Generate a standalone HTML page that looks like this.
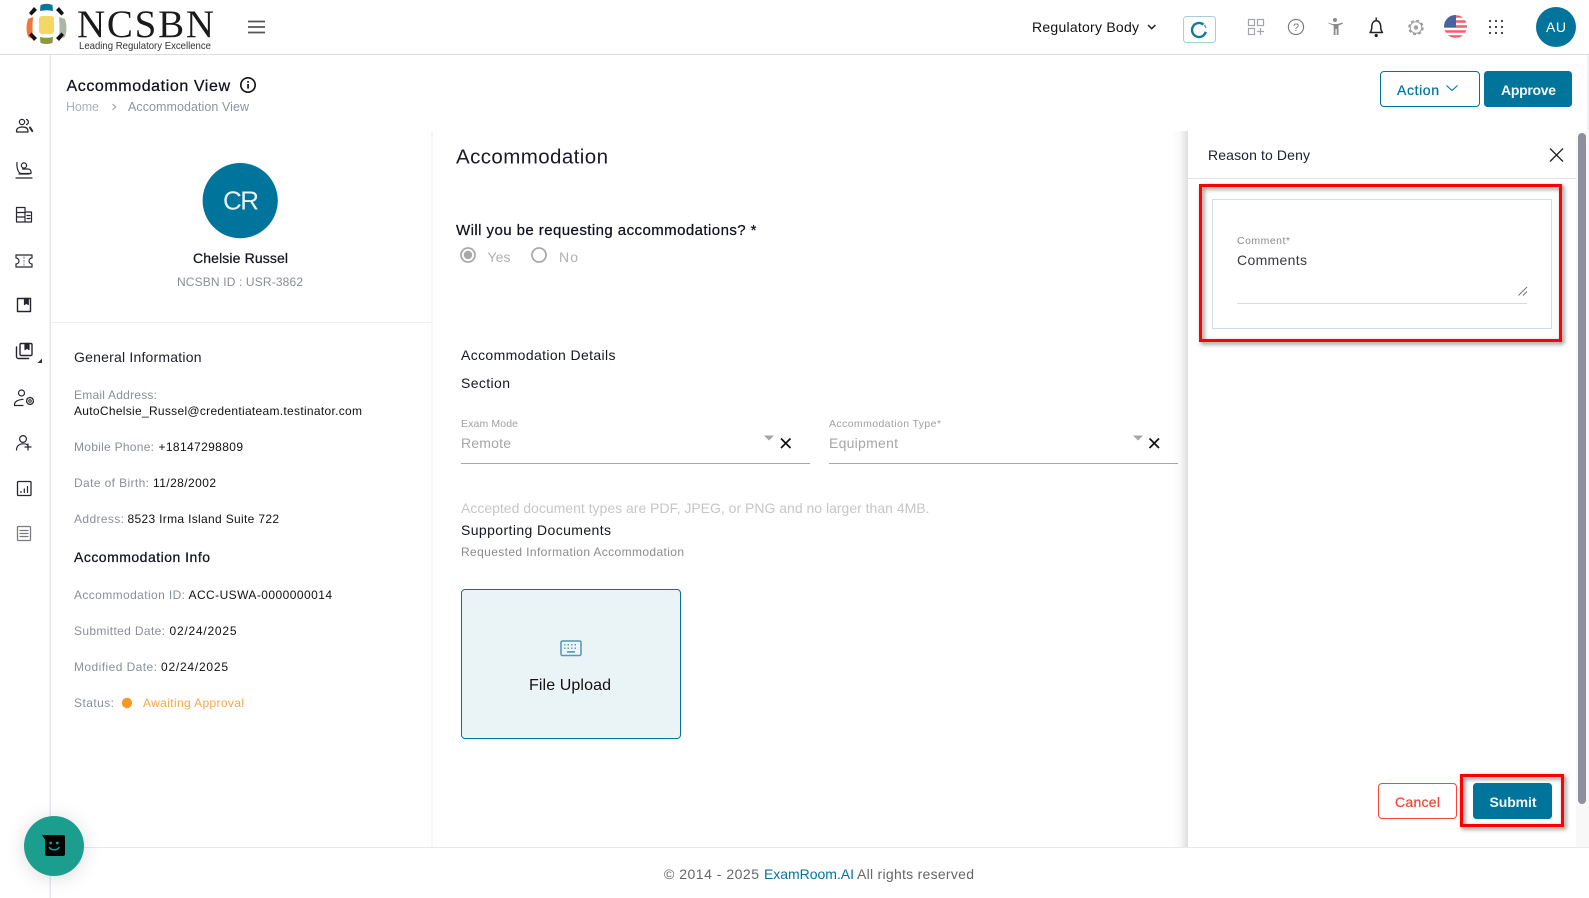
<!DOCTYPE html>
<html lang="en">
<head>
<meta charset="utf-8">
<title>Accommodation View</title>
<style>
html,body{margin:0;padding:0;background:#fff;width:1589px;height:898px;overflow:hidden}
svg{display:block;font-family:"Liberation Sans",Arial,sans-serif}
text{white-space:pre}
.m{stroke-width:.25}
.lab{fill:#8a8f98;font-size:12px}
.val{fill:#111;font-size:12px}
.i{fill:none;stroke:#26262e;stroke-width:1.2;stroke-linecap:round;stroke-linejoin:round}
</style>
</head>
<body>
<svg width="1589" height="898" viewBox="0 0 1589 898" xmlns="http://www.w3.org/2000/svg">
<defs>
<linearGradient id="sh" x1="0" x2="1" y1="0" y2="0"><stop offset="0" stop-color="#000" stop-opacity="0"/><stop offset=".5" stop-color="#000" stop-opacity=".025"/><stop offset="1" stop-color="#000" stop-opacity=".13"/></linearGradient>
<clipPath id="fl"><circle cx="1455.5" cy="26.5" r="11.5"/></clipPath>
<filter id="cs" x="-40%" y="-40%" width="180%" height="180%"><feDropShadow dx="0" dy="2" stdDeviation="9" flood-color="#000" flood-opacity=".14"/></filter>
</defs>
<rect width="1589" height="898" fill="#fff"/>

<!-- structure lines -->
<rect x="0" y="54" width="1589" height="1" fill="#d9dfe4"/>
<rect x="49.500" y="55" width="1.400" height="843" fill="#e6e6ef"/>
<rect x="431.500" y="131" width="1" height="716" fill="#efeff3"/>
<rect x="51" y="322" width="381" height="1" fill="#efeff3"/>
<rect x="51" y="847" width="1538" height="1" fill="#e8e8ec"/>
<rect x="1587.500" y="55" width="1" height="76" fill="#e4e4e8"/>

<!-- logo -->
<g>
<path d="M40 11 L40.500 5 Q46.500 2.500 52.500 5 L53 11 Q46.500 9.500 40 11Z" fill="#0b7797"/>
<path d="M33 17 L28 19 Q25 28 28 37 L33 39 Q32 28 33 17Z" fill="#f0763c"/>
<path d="M59 17 L65 19 Q68 28 65 37 L59 39 Q60 28 59 17Z" fill="#adb5a5"/>
<path d="M40 37 Q46.500 38.500 53 37 L52.500 43 Q46.500 45 40.500 43Z" fill="#8a9a3d"/>
<rect x="39" y="16" width="15" height="18" rx="3" fill="#f4d765"/>
<path d="M29 13 L34 7 L37 10 L31.500 15.500Z M64 13 L59 7 L56 10 L61.500 15.500Z M29 35 L34 41 L37 38 L31.500 32.500Z M64 35 L59 41 L56 38 L61.500 32.500Z" fill="#141414"/>
<text x="77" y="37" font-family="'Liberation Serif',serif" font-size="39" fill="#1a1a1a" textLength="137">NCSBN</text>
<text x="79" y="49" font-size="10.500" fill="#333" textLength="132" lengthAdjust="spacingAndGlyphs">Leading Regulatory Excellence</text>
</g>
<path d="M248 21.500H265M248 27H265M248 32.500H265" stroke="#555" stroke-width="1.700"/>

<!-- header right -->
<text x="1032" y="32" font-size="14" fill="#111" textLength="107">Regulatory Body</text>
<path d="M1148 25l3.700 3.700L1155.400 25" fill="none" stroke="#222" stroke-width="1.500"/>
<rect x="1183.500" y="16.500" width="32" height="26" rx="3" fill="#fff" stroke="#a6cfdd"/>
<path d="M1205.800 31.800A7 7 0 1 1 1203.500 24.600" fill="none" stroke="#0f7b9e" stroke-width="2.400"/>
<path d="M1204.500 24.800L1206 28" fill="none" stroke="#5fa8bf" stroke-width="1.600"/>
<g fill="none" stroke="#a3a7ad" stroke-width="1.200">
<rect x="1248.500" y="19.500" width="6" height="6"/><rect x="1257.500" y="19.500" width="6" height="6"/><rect x="1248.500" y="28.500" width="6" height="6"/><path d="M1257 31.500h7M1260.500 28v7"/>
</g>
<circle cx="1296" cy="27" r="7.600" fill="none" stroke="#777" stroke-width="1.100"/>
<text x="1296" y="31" font-size="11" fill="#777" text-anchor="middle">?</text>
<g fill="#8a8a8a" transform="translate(-1.500 0)"><circle cx="1336.500" cy="20" r="2"/><path d="M1329 22.500l5 1.500h5l5-1.500.4 1.300-4.400 1.700v9.500h-1.800v-6h-1.200v6h-1.800v-9.500l-4.600-1.700z"/></g>
<g transform="translate(-1 0)">
<path d="M1371 32.500h12.500c-1.400-1.500-1.800-3-1.800-6 0-3.300-1.800-5.600-4.400-5.900-2.700.3-4.500 2.600-4.500 5.900 0 3-.4 4.500-1.800 6z" fill="none" stroke="#222" stroke-width="1.500" stroke-linejoin="round"/>
<path d="M1377.200 17.500v3" stroke="#222" stroke-width="1.400"/><circle cx="1377.200" cy="35.500" r="1.600" fill="#222"/>
</g>
<g fill="none" stroke="#9a9a9a"><circle cx="1416" cy="27.500" r="5.800" stroke-width="1"/><circle cx="1416" cy="27.500" r="7" stroke-width="1.600" stroke-dasharray="3 2.500"/></g>
<circle cx="1416" cy="27.500" r="2.200" fill="#a0a0a0"/>
<g clip-path="url(#fl)">
<rect x="1444" y="15" width="23" height="23" fill="#fff"/>
<path d="M1444 16.500h23M1444 21.500h23M1444 26.500h23M1444 31.500h23M1444 36.500h23" stroke="#ef5f6e" stroke-width="2.600"/>
<rect x="1444" y="15" width="12" height="12.500" fill="#47639f"/>
</g>
<g fill="#333">
<circle cx="1490" cy="21" r="1.100"/><circle cx="1496" cy="21" r="1.100"/><circle cx="1502" cy="21" r="1.100"/>
<circle cx="1490" cy="27" r="1.100"/><circle cx="1496" cy="27" r="1.100"/><circle cx="1502" cy="27" r="1.100"/>
<circle cx="1490" cy="33" r="1.100"/><circle cx="1496" cy="33" r="1.100"/><circle cx="1502" cy="33" r="1.100"/>
</g>
<circle cx="1556" cy="27" r="20" fill="#00749b"/>
<text x="1546" y="32" font-size="14" fill="#fff" textLength="20">AU</text>

<!-- page title -->
<text x="66.500" y="91" font-size="16" fill="#10121c" stroke="#10121c" class="m" textLength="163.500">Accommodation View</text>
<circle cx="248" cy="85" r="7.200" fill="none" stroke="#111" stroke-width="1.600"/>
<rect x="247.200" y="84" width="1.700" height="4.600" fill="#111"/><rect x="247.200" y="81" width="1.700" height="1.700" fill="#111"/>
<text x="66" y="111" font-size="12.500" fill="#aeb0b8" textLength="33">Home</text>
<path d="M112.500 104l3.200 3-3.200 3" fill="none" stroke="#9a9ca4" stroke-width="1"/>
<text x="128" y="111" font-size="12.500" fill="#8f93a3" textLength="121">Accommodation View</text>

<rect x="1380.500" y="71.500" width="99" height="35" rx="3.500" fill="#fff" stroke="#00749b"/>
<text x="1397" y="95" font-size="14" fill="#00749b" stroke="#00749b" class="m" textLength="42">Action</text>
<path d="M1446.500 85.500l5.500 5 5.500-5" fill="none" stroke="#00749b" stroke-width="1.100"/>
<rect x="1484" y="71" width="88" height="36" rx="3.500" fill="#00749b"/>
<text x="1501" y="95" font-size="14" font-weight="700" fill="#f2f7f9" textLength="55">Approve</text>

<!-- sidebar icons -->
<g class="i">
<circle cx="22" cy="122" r="2.600"/><path d="M26.500 119.500a2.600 2.600 0 0 1 0 5"/><path d="M16.500 132v-1c0-2.800 2.600-4 5.800-4s5.700 1.200 5.700 4v1z"/><path d="M30 127.500l2.200 3.500" stroke-width="2"/>
<path d="M16 178h16"/><path d="M17 162.500c-.6 4 .5 9 3.500 11H31v-1.500c0-1.800-1.200-3-3-3h-5.500"/><circle cx="24" cy="165.500" r="2.600"/><path d="M19 174h10"/>
<path d="M16.500 207.500h8.500v14.500h-8.500zM16.500 212.500h8.500M16.500 217h8.500M25 212h6.500v10H25M27 215.500h3M27 218.500h3"/>
<path d="M16 255h16v3a3 3 0 0 0 0 6v3H16v-3a3 3 0 0 0 0-6z"/><path d="M24 257v8" stroke="#999" stroke-dasharray="1.500 2"/>
<rect x="17.500" y="298.500" width="13" height="13" stroke-width="1.400"/>
<path d="M24.500 298.500h3.800v6l-1.900-1.400-1.900 1.400z" fill="#26262e"/>
<rect x="20" y="343.500" width="12" height="12" rx="1.200" stroke-width="1.400"/><path d="M16.500 347v9.500a2 2 0 0 0 2 2h10" stroke-width="1.400"/><path d="M25 343.500h4v6l-2-1.400-2 1.400z" fill="#26262e"/>
<circle cx="21.500" cy="393" r="3"/><path d="M14.500 405v-.5c0-3 3.600-4.800 8.500-5.200M14.500 405.500H23"/>
<circle cx="30" cy="401" r="1.300" stroke-width="1"/><circle cx="30" cy="401" r="3.400" stroke-dasharray="1.800 1.200" stroke-width="1.400"/>
<circle cx="23" cy="439" r="3.400"/><path d="M16.500 450c0-4 2.800-6.200 6.500-6.200s3.500.5 4.500 1.200M25 447h6M28 444v6"/>
<rect x="17.500" y="481.500" width="13.500" height="14" rx="1" stroke-width="1.300"/><path d="M21 492.500v-1M24.300 492.500v-3.500M27.500 492.500v-6"/>
<g stroke="#7a7a80"><rect x="17.500" y="526.500" width="13" height="14" rx="1" stroke-width="1.300"/><path d="M20 530.500h8M20 533.500h8M20 536.500h8"/></g>
</g>
<path d="M37.500 363h4.500v-4.500z" fill="#333"/>

<!-- left panel -->
<circle cx="240.200" cy="200.600" r="37.600" fill="#00749b"/>
<text x="223" y="209.500" font-size="26" fill="#e8f2f6" textLength="36">CR</text>
<text x="193" y="263" font-size="14" fill="#15171f" stroke="#15171f" class="m" textLength="95">Chelsie Russel</text>
<text x="177" y="286" font-size="12" fill="#8a8d94" textLength="126">NCSBN ID : USR-3862</text>

<text x="74" y="362" font-size="14" fill="#20222a" textLength="127.500">General Information</text>
<text x="74" y="399" class="lab" textLength="83">Email Address:</text>
<text x="74" y="415" class="val" textLength="288">AutoChelsie_Russel@credentiateam.testinator.com</text>
<text x="74" y="451" class="lab" textLength="80">Mobile Phone:</text>
<text x="158.500" y="451" class="val" textLength="84.500">+18147298809</text>
<text x="74" y="487" class="lab" textLength="75">Date of Birth:</text>
<text x="153" y="487" class="val" textLength="63">11/28/2002</text>
<text x="74" y="523" class="lab" textLength="50">Address:</text>
<text x="127.500" y="523" class="val" textLength="151.500">8523 Irma Island Suite 722</text>
<text x="74" y="562" font-size="14" fill="#10121c" stroke="#10121c" class="m" textLength="136">Accommodation Info</text>
<text x="74" y="599" class="lab" textLength="111">Accommodation ID:</text>
<text x="188.500" y="599" class="val" textLength="143.500">ACC-USWA-0000000014</text>
<text x="74" y="635" class="lab" textLength="91">Submitted Date:</text>
<text x="169.500" y="635" class="val" textLength="67">02/24/2025</text>
<text x="74" y="671" class="lab" textLength="83">Modified Date:</text>
<text x="161" y="671" class="val" textLength="67">02/24/2025</text>
<text x="74" y="707" class="lab" textLength="40">Status:</text>
<circle cx="127" cy="703" r="5.200" fill="#f59a23"/>
<text x="143" y="707" font-size="12" fill="#f7a64a" textLength="101">Awaiting Approval</text>

<!-- main -->
<text x="456" y="163.500" font-size="20.500" fill="#1a1a22" textLength="152">Accommodation</text>
<text x="456" y="235" font-size="15" fill="#10121c" stroke="#10121c" class="m" textLength="300.500">Will you be requesting accommodations? *</text>
<circle cx="468" cy="255" r="7" fill="none" stroke="#a9a9a9" stroke-width="1.800"/><circle cx="468" cy="255" r="4.200" fill="#a9a9a9"/>
<text x="487.500" y="262" font-size="14" fill="#b0b0b0" textLength="23">Yes</text>
<circle cx="539" cy="255" r="7" fill="none" stroke="#a9a9a9" stroke-width="1.800"/>
<text x="559" y="262" font-size="14" fill="#b0b0b0" textLength="19">No</text>
<text x="461" y="360" font-size="14" fill="#15171f" textLength="154.500">Accommodation Details</text>
<text x="461" y="388" font-size="14" fill="#15171f" textLength="49">Section</text>

<text x="461" y="427" font-size="10.500" fill="#a0a0a0" textLength="57">Exam Mode</text>
<text x="461" y="448" font-size="14" fill="#a6a6a6" textLength="50">Remote</text>
<rect x="461" y="463" width="349" height="1" fill="#a8a8a8"/>
<path d="M764 435.500h10l-5 5z" fill="#a5a5a5"/>
<path d="M781 438.500l9.500 9.500M790.500 438.500L781 448" stroke="#111" stroke-width="1.700"/>
<text x="829" y="427" font-size="10.500" fill="#a0a0a0" textLength="112">Accommodation Type*</text>
<text x="829" y="448" font-size="14" fill="#a6a6a6" textLength="69">Equipment</text>
<rect x="829" y="463" width="349" height="1" fill="#a8a8a8"/>
<path d="M1133 435.500h10l-5 5z" fill="#a5a5a5"/>
<path d="M1149.500 438.500l9.500 9.500M1159 438.500l-9.500 9.500" stroke="#111" stroke-width="1.700"/>

<text x="461" y="513" font-size="14" fill="#c6c6c6" textLength="468.500">Accepted document types are PDF, JPEG, or PNG and no larger than 4MB.</text>
<text x="461" y="535" font-size="14" fill="#15171f" textLength="150">Supporting Documents</text>
<text x="461" y="556" font-size="12" fill="#8c8c8c" textLength="223">Requested Information Accommodation</text>

<rect x="461.500" y="589.500" width="219" height="149" rx="3.500" fill="#eaf3f6" stroke="#00749b"/>
<rect x="561" y="641" width="20" height="14.500" rx="1.500" fill="#eef5f8" stroke="#4e98b4" stroke-width="1.500"/>
<g fill="#5ba3bd"><rect x="564" y="644" width="1.500" height="1.500"/><rect x="567.500" y="644" width="1.500" height="1.500"/><rect x="571" y="644" width="1.500" height="1.500"/><rect x="574.500" y="644" width="1.500" height="1.500"/><rect x="564" y="647.500" width="1.500" height="1.500"/><rect x="567.500" y="647.500" width="1.500" height="1.500"/><rect x="571" y="647.500" width="1.500" height="1.500"/><rect x="574.500" y="647.500" width="1.500" height="1.500"/><rect x="567" y="651" width="8" height="1.800"/></g>
<text x="529" y="690" font-size="16" fill="#111" textLength="82">File Upload</text>

<!-- side drawer -->
<rect x="1172" y="131" width="16" height="716" fill="url(#sh)"/>
<rect x="1188" y="131" width="388" height="716" fill="#fff"/>
<rect x="1576" y="131" width="13" height="716" fill="#f8f8f9"/>
<rect x="1578" y="133" width="8" height="671" rx="4" fill="#8d8f9b"/>
<text x="1208" y="160" font-size="14" fill="#20222a" textLength="102">Reason to Deny</text>
<path d="M1550 148.500l13 13M1563 148.500l-13 13" stroke="#222" stroke-width="1.300"/>
<rect x="1188" y="178" width="388" height="1" fill="#dfe4ec"/>

<rect x="1212.500" y="199.500" width="339" height="129" fill="#fff" stroke="#d6dce6"/>
<text x="1237" y="244" font-size="10.500" fill="#8a8a8a" textLength="53">Comment*</text>
<text x="1237" y="265" font-size="14" fill="#3a3a40" textLength="70">Comments</text>
<rect x="1237" y="303" width="290" height="1" fill="#dcdcdc"/>
<path d="M1518.500 295.500l8.500-8.500M1523 295.500l4-4" stroke="#666" stroke-width=".9"/>
<rect x="1200.500" y="185.500" width="360" height="155" fill="none" stroke="#f00" stroke-width="3" style="filter:drop-shadow(2px 2px 2px rgba(0,0,0,.5))"/>

<rect x="1378.500" y="783.500" width="78" height="35" rx="3.500" fill="#fff" stroke="#f4473a"/>
<text x="1395" y="807" font-size="14" fill="#f4473a" stroke="#f4473a" class="m" textLength="45">Cancel</text>
<rect x="1473" y="783" width="79" height="36" rx="3.500" fill="#00749b"/>
<text x="1489.500" y="807" font-size="14" font-weight="700" fill="#f2f7f9" textLength="47">Submit</text>
<rect x="1461.500" y="775.500" width="101" height="50" fill="none" stroke="#f00" stroke-width="3" style="filter:drop-shadow(2px 2px 2px rgba(0,0,0,.5))"/>

<!-- footer -->
<text x="664" y="879" font-size="14" fill="#666" textLength="95">© 2014 - 2025</text>
<text x="764" y="879" font-size="14" fill="#00749b" textLength="90">ExamRoom.AI</text>
<text x="857" y="879" font-size="14" fill="#666" textLength="117">All rights reserved</text>

<!-- chat -->
<circle cx="54" cy="846" r="30" fill="#1f9e8f" filter="url(#cs)"/>
<path d="M42 835H63a2 2 0 0 1 2 2v17a2 2 0 0 1-2 2H47a2 2 0 0 1-2-2V839.500z" fill="#050505"/>
<circle cx="50.700" cy="843" r="1.400" fill="#1f9e8f"/><circle cx="57.300" cy="843" r="1.400" fill="#1f9e8f"/>
<path d="M49.500 847.500c1.500 3 8 3 9.500 0" fill="none" stroke="#1f9e8f" stroke-width="1.500" stroke-linecap="round"/>
</svg>
</body>
</html>
